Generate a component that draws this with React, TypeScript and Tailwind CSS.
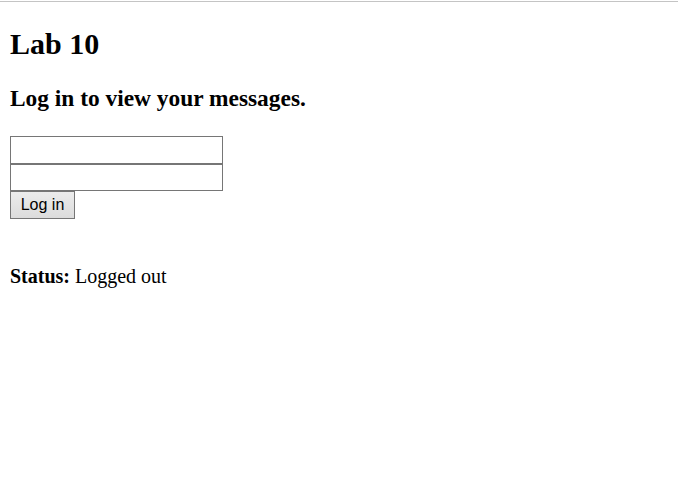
export default function App() {
  return (
    <div className="min-h-[481px] bg-white pt-px font-['Liberation_Serif',serif] text-black">
      <div className="h-px bg-[#c4c4c4]" />
      <div className="flex flex-col items-start pl-[10px]">
        <h1 className="mt-[24px] text-[30px] font-bold leading-[35px]">Lab 10</h1>
        <h2 className="mt-[24px] text-[23.4px] font-bold leading-[27px]">Log in to view your messages.</h2>
        <form className="mt-[24px] flex flex-col items-start" onSubmit={(e) => e.preventDefault()}>
          <input type="text" className="box-border h-[28px] w-[213px] border border-[#767676] bg-white px-[2px] font-['Liberation_Sans',sans-serif] text-[16px] outline-none" />
          <input type="password" className="box-border h-[27px] w-[213px] border border-[#767676] bg-white px-[2px] font-['Liberation_Sans',sans-serif] text-[16px] outline-none" />
          <button type="submit" className="box-border h-[28px] w-[65px] border border-[#767676] bg-gradient-to-b from-[#ececec] to-[#dcdcdc] font-['Liberation_Sans',sans-serif] text-[16px] leading-none text-black">
            Log in
          </button>
        </form>
        <p className="mt-[46px] text-[20px] leading-[23px]">
          <b>Status:</b> Logged out
        </p>
      </div>
    </div>
  );
}
